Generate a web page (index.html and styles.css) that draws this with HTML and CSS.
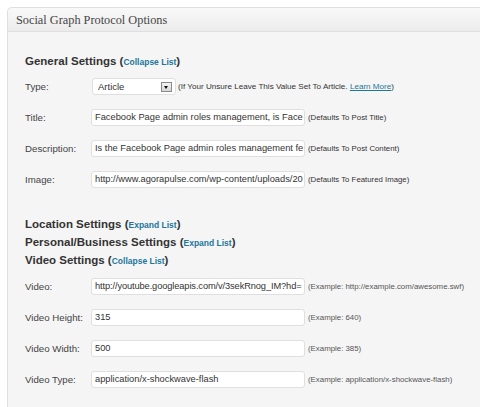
FILE: index.html
```html
<!DOCTYPE html>
<html>
<head>
<meta charset="utf-8">
<link rel="stylesheet" href="styles.css">
</head>
<body>
<div class="box">
  <div class="box-head">Social Graph Protocol Options</div>
  <div class="box-body">
    <div class="section-title first">General Settings (<a class="toggle" href="#">Collapse List</a>)</div>
    <div class="rows">
      <div class="row">
        <div class="label">Type:</div>
        <div class="select"><span>Article</span><span class="arrow"></span></div>
        <div class="help first-help">(If Your Unsure Leave This Value Set To Article. <a href="#" class="learn">Learn More</a>)</div>
      </div>
      <div class="row">
        <div class="label">Title:</div>
        <div class="field">Facebook Page admin roles management, is Face</div>
        <div class="help">(Defaults To Post Title)</div>
      </div>
      <div class="row">
        <div class="label">Description:</div>
        <div class="field">Is the Facebook Page admin roles management fe</div>
        <div class="help">(Defaults To Post Content)</div>
      </div>
      <div class="row">
        <div class="label">Image:</div>
        <div class="field">http://www.agorapulse.com/wp-content/uploads/20</div>
        <div class="help">(Defaults To Featured Image)</div>
      </div>
    </div>
    <div class="section-title spaced">Location Settings (<a class="toggle" href="#">Expand List</a>)</div>
    <div class="section-title">Personal/Business Settings (<a class="toggle" href="#">Expand List</a>)</div>
    <div class="section-title">Video Settings (<a class="toggle" href="#">Collapse List</a>)</div>
    <div class="rows video">
      <div class="row">
        <div class="label">Video:</div>
        <div class="field tight">http://youtube.googleapis.com/v/3sekRnog_IM?hd=</div>
        <div class="help ex">(Example: http://example.com/awesome.swf)</div>
      </div>
      <div class="row">
        <div class="label">Video Height:</div>
        <div class="field">315</div>
        <div class="help ex">(Example: 640)</div>
      </div>
      <div class="row">
        <div class="label">Video Width:</div>
        <div class="field">500</div>
        <div class="help ex">(Example: 385)</div>
      </div>
      <div class="row">
        <div class="label">Video Type:</div>
        <div class="field">application/x-shockwave-flash</div>
        <div class="help ex">(Example: application/x-shockwave-flash)</div>
      </div>
    </div>
  </div>
</div>
</body>
</html>
```

FILE: styles.css
```css
html, body {
  margin: 0;
  padding: 0;
  background: #fff;
  overflow: hidden;
}
body {
  font-family: "Liberation Sans", Arial, sans-serif;
  color: #333;
}
.box {
  box-sizing: border-box;
  margin: 7px -20px 0 7px;
  border: 1px solid #dfdfdf;
  border-bottom: none;
  border-radius: 5px 5px 0 0;
  background: #f5f5f5;
  height: 400px;
}
.box-head {
  height: 23px;
  line-height: 24px;
  padding-left: 8px;
  font-family: "Liberation Serif", Georgia, serif;
  font-size: 12.3px;
  color: #464646;
  background: linear-gradient(#f9f9f9, #ececec);
  border-bottom: 1px solid #dfdfdf;
  border-radius: 5px 5px 0 0;
}
.box-body {
  padding: 20px 0 0 17px;
}
.section-title {
  font-size: 11.5px;
  font-weight: bold;
  line-height: 18px;
  height: 18px;
  color: #333;
}
.section-title.spaced {
  margin-top: 20px;
}
.section-title .toggle {
  font-size: 8.5px;
  color: #21759b;
  text-decoration: none;
}
.rows {
  display: flex;
  flex-direction: column;
  margin-top: 1px;
}
.rows.video {
  margin-top: 2px;
}
.row {
  display: flex;
  align-items: center;
  height: 31px;
}
.label {
  width: 66px;
  flex: none;
  font-size: 9.7px;
  color: #444;
}
.field {
  box-sizing: border-box;
  width: 214px;
  height: 17px;
  flex: none;
  padding: 0 3px;
  border: 1px solid #dfdfdf;
  border-radius: 3px;
  background: #fff;
  font-size: 9.3px;
  line-height: 15px;
  color: #333;
  white-space: nowrap;
  overflow: hidden;
}
.field.tight {
  letter-spacing: -0.12px;
}
.select {
  box-sizing: border-box;
  width: 84px;
  height: 17px;
  margin-left: 1px;
  flex: none;
  display: flex;
  align-items: center;
  justify-content: space-between;
  padding: 0 3px 0 5px;
  border: 1px solid #dfdfdf;
  border-radius: 3px;
  background: #fff;
  font-size: 9.5px;
  color: #333;
}
.arrow {
  box-sizing: border-box;
  width: 11px;
  height: 10px;
  border: 1px solid #8a8a8a;
  background: linear-gradient(#f4f4f4, #d8d8d8);
  position: relative;
}
.arrow::after {
  content: "";
  position: absolute;
  left: 2px;
  top: 3px;
  border-left: 2.5px solid transparent;
  border-right: 2.5px solid transparent;
  border-top: 3px solid #111;
}
.help {
  margin-left: 3px;
  font-size: 7.8px;
  color: #333;
  white-space: nowrap;
}
.help.first-help {
  margin-left: 2px;
  font-size: 8.1px;
}
.help.ex {
  font-size: 7.85px;
  color: #555;
}
.learn {
  color: #21759b;
  text-decoration: underline;
}
```
